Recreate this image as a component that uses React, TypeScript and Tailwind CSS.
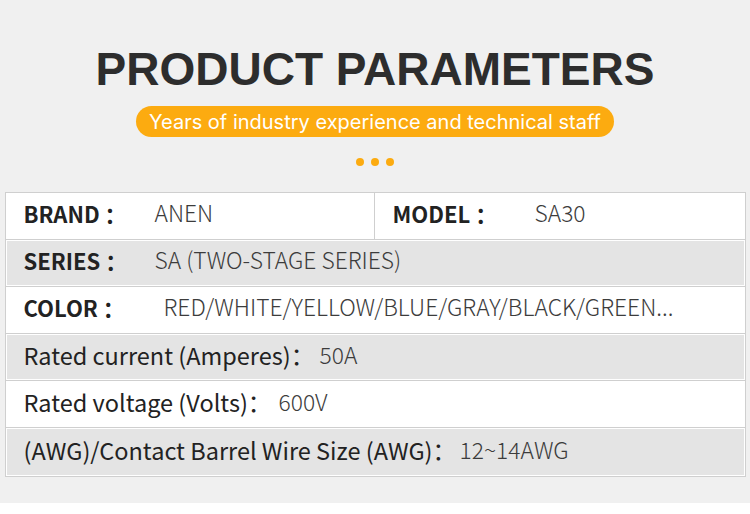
export default function App() {
  const rows = [
    { label: "SERIES ：", value: "SA (TWO-STAGE SERIES)", bold: true, gray: true, gap: "w-[131px]" },
    { label: "COLOR ：", value: "RED/WHITE/YELLOW/BLUE/GRAY/BLACK/GREEN...", bold: true, gray: false, gap: "w-[140px]" },
    { label: "Rated current (Amperes)：", value: "50A", bold: false, gray: true, gap: "w-[296px]" },
    { label: "Rated voltage (Volts)：", value: "600V", bold: false, gray: false, gap: "w-[255px]" },
    { label: "(AWG)/Contact Barrel Wire Size (AWG)：", value: "12~14AWG", bold: false, gray: true, gap: "w-[436px]" },
  ];

  return (
    <div className="w-[750px] h-[514px] bg-white font-['Noto_Sans_CJK_SC',sans-serif]">
      <div className="h-[503px] bg-[#f0f0f0] flex flex-col items-center">
        <h1 className="mt-[46px] text-[46px] leading-none font-bold text-[#2d2d2d] font-['Liberation_Sans',Arial,sans-serif]">
          PRODUCT PARAMETERS
        </h1>
        <div className="mt-[14px] h-[31px] w-[478px] rounded-full bg-[#fcab10] flex items-center justify-center text-white text-[20px] font-['Inter',sans-serif]">
          Years of industry experience and technical staff
        </div>
        <div className="mt-[21px] flex gap-[7px]">
          <span className="w-[8px] h-[8px] rounded-full bg-[#fcab10]" />
          <span className="w-[8px] h-[8px] rounded-full bg-[#fcab10]" />
          <span className="w-[8px] h-[8px] rounded-full bg-[#fcab10]" />
        </div>

        <div className="mt-[26px] w-[741px] border border-[#cfcfcf] bg-white">
          <div className="h-[47px] flex border-b border-[#cfcfcf]">
            <div className="w-[369px] flex items-center pl-[18px] pb-[5px] border-r border-[#cfcfcf]">
              <span className="w-[131px] font-bold text-[22px] text-[#222]">BRAND ：</span>
              <span className="text-[22.8px] text-[#3c3c3c] font-light">ANEN</span>
            </div>
            <div className="flex-1 flex items-center pl-[18px] pb-[5px]">
              <span className="w-[142px] font-bold text-[22px] text-[#222]">MODEL  ：</span>
              <span className="text-[22.8px] text-[#3c3c3c] font-light">SA30</span>
            </div>
          </div>
          {rows.map((r, i) => (
            <div
              key={r.label}
              className={`flex p-[1px] ${i === rows.length - 1 ? "h-[48px]" : "h-[47px] border-b border-[#cfcfcf]"}`}
            >
              <div
                className={`flex-1 flex items-center pl-[17px] ${r.bold ? "pb-[5px]" : "pb-[3px]"} ${r.gray ? "bg-[#e4e4e4]" : ""}`}
              >
                <span className={`${r.gap} text-[#222] ${r.bold ? "font-bold text-[22px]" : "text-[23.5px]"}`}>{r.label}</span>
                <span className="text-[22.8px] text-[#3c3c3c] font-light">{r.value}</span>
              </div>
            </div>
          ))}
        </div>
      </div>
    </div>
  );
}
